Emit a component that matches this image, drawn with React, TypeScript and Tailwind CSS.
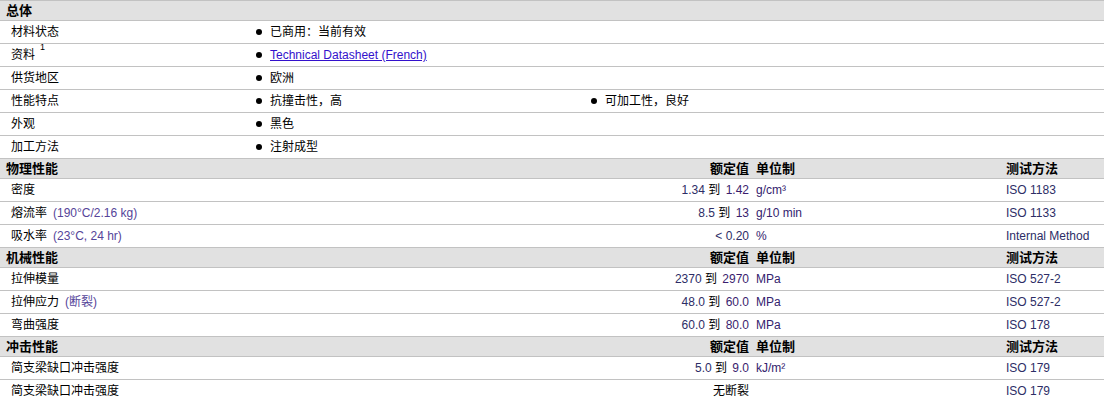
import React from "react";

const FONT = "font-['Liberation_Sans','Noto_Sans_CJK_SC',sans-serif]";

type GeneralRow = { label: string; sup?: string; items: { text: string; link?: boolean }[] };
type PropRow = { label: string; cond?: string; from?: string; to?: string; plain?: string; unit?: string; method: string };

const general: GeneralRow[] = [
  { label: "材料状态", items: [{ text: "已商用：当前有效" }] },
  { label: "资料", sup: "1", items: [{ text: "Technical Datasheet (French)", link: true }] },
  { label: "供货地区", items: [{ text: "欧洲" }] },
  { label: "性能特点", items: [{ text: "抗撞击性，高" }, { text: "可加工性，良好" }] },
  { label: "外观", items: [{ text: "黑色" }] },
  { label: "加工方法", items: [{ text: "注射成型" }] },
];

const sections: { title: string; rows: PropRow[] }[] = [
  {
    title: "物理性能",
    rows: [
      { label: "密度", from: "1.34", to: "1.42", unit: "g/cm³", method: "ISO 1183" },
      { label: "熔流率", cond: "(190°C/2.16 kg)", from: "8.5", to: "13", unit: "g/10 min", method: "ISO 1133" },
      { label: "吸水率", cond: "(23°C, 24 hr)", from: "< 0.20", unit: "%", method: "Internal Method" },
    ],
  },
  {
    title: "机械性能",
    rows: [
      { label: "拉伸模量", from: "2370", to: "2970", unit: "MPa", method: "ISO 527-2" },
      { label: "拉伸应力", cond: "(断裂)", from: "48.0", to: "60.0", unit: "MPa", method: "ISO 527-2" },
      { label: "弯曲强度", from: "60.0", to: "80.0", unit: "MPa", method: "ISO 178" },
    ],
  },
  {
    title: "冲击性能",
    rows: [
      { label: "简支梁缺口冲击强度", from: "5.0", to: "9.0", unit: "kJ/m²", method: "ISO 179" },
      { label: "简支梁缺口冲击强度", plain: "无断裂", method: "ISO 179" },
    ],
  },
];

function SectionHeader({ title, cols }: { title: string; cols?: boolean }) {
  return (
    <div className="flex h-[20px] items-center bg-[#e1e1e1] border-b border-[#c2c2c2] text-[13px] font-bold text-black">
      <div className="w-[500px] pl-[6px]">{title}</div>
      {cols && (
        <>
          <div className="w-[249px] text-right">额定值</div>
          <div className="w-[257px] pl-[7px]">单位制</div>
          <div className="flex-1">测试方法</div>
        </>
      )}
    </div>
  );
}

function Bullet() {
  return <span className="inline-block w-[6px] h-[6px] rounded-full bg-black mr-[8px]" />;
}

export default function App() {
  return (
    <div className={`w-[1104px] h-[400px] overflow-hidden bg-white text-[12px] text-black ${FONT}`}>
      <div className="border-t border-[#c2c2c2]">
        <SectionHeader title="总体" />
        {general.map((r) => (
          <div key={r.label} className="flex h-[23px] items-center border-b border-[#c2c2c2]">
            <div className="w-[250px] pl-[11px] flex items-start">
              <span>{r.label}</span>
              {r.sup && <span className="ml-[5px] text-[9px] leading-none relative -top-[3px]">{r.sup}</span>}
            </div>
            {r.items.map((it) => (
              <div key={it.text} className="w-[335px] pl-[6px] flex items-center">
                <Bullet />
                {it.link ? (
                  <a href="#" className="text-[#3311cc] underline">{it.text}</a>
                ) : (
                  <span>{it.text}</span>
                )}
              </div>
            ))}
          </div>
        ))}
        {sections.map((s) => (
          <div key={s.title}>
            <SectionHeader title={s.title} cols />
            {s.rows.map((r, i) => (
              <div key={i} className="flex h-[23px] items-center border-b border-[#c2c2c2]">
                <div className="w-[500px] pl-[11px]">
                  {r.label}
                  {r.cond && <span className="ml-[6px] text-[#554499]">{r.cond}</span>}
                </div>
                <div className="w-[249px] text-right whitespace-pre">
                  {r.plain ? (
                    <span>{r.plain}</span>
                  ) : (
                    <>
                      <span className="text-[#2d2d66]">{r.from}</span>
                      {r.to && (
                        <>
                          <span> 到 </span>
                          <span className="ml-[2px] text-[#3a1d6e]">{r.to}</span>
                        </>
                      )}
                    </>
                  )}
                </div>
                <div className="w-[257px] pl-[7px] text-[#33226e]">{r.unit}</div>
                <div className="flex-1 text-[#2d2d66] whitespace-nowrap">{r.method}</div>
              </div>
            ))}
          </div>
        ))}
      </div>
    </div>
  );
}
